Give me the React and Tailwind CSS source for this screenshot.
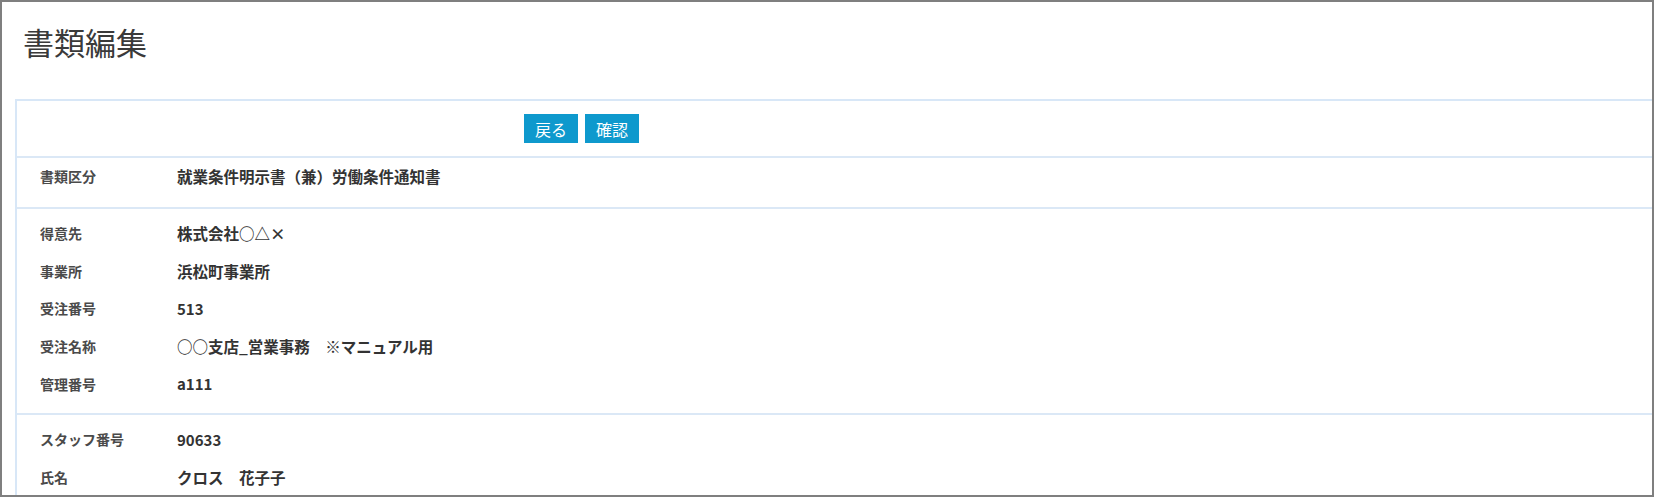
import React from "react";

const FONT = { fontFamily: '"Noto Sans CJK JP", "Liberation Sans", sans-serif' };

function Row({ label, value, latin }) {
  return (
    <div className="flex h-[37.7px] items-center">
      <div className="w-[160px] pl-[23px] text-[14px] font-bold text-[#4a4a4a]">{label}</div>
      <div className={`${latin ? "text-[15px]" : "text-[15.5px]"} font-bold text-[#333]`}>{value}</div>
    </div>
  );
}

export default function App() {
  return (
    <div
      className="flex h-[497px] w-[1654px] flex-col overflow-hidden border-2 border-[#7f7f7f] bg-white"
      style={FONT}
    >
      <div className="mt-[2px] h-[2px] bg-[#dfeaf6]" />
      <h1 className="mt-[18px] h-[40px] pl-[21px] text-[31px] font-normal leading-[40px] text-[#3a3a3a]">
        書類編集
      </h1>
      <div className="ml-[13px] mt-[37px] flex-1 border-l-2 border-t-2 border-[#d8e7f7]">
        <div className="flex h-[57px] items-center gap-[7px] border-b-2 border-[#dbe8f6] pl-[507px]">
          <button className="flex h-[29px] w-[54px] items-center justify-center bg-[#0e99cd] text-[16px] text-white">
            戻る
          </button>
          <button className="flex h-[29px] w-[54px] items-center justify-center bg-[#0e99cd] text-[16px] text-white">
            確認
          </button>
        </div>
        <div className="border-b-2 border-[#dbe8f6] pb-[11px]">
          <Row label="書類区分" value="就業条件明示書（兼）労働条件通知書" />
        </div>
        <div className="border-b-2 border-[#dbe8f6] pb-[10px] pt-[6px]">
          <Row label="得意先" value="株式会社○△×" />
          <Row label="事業所" value="浜松町事業所" />
          <Row label="受注番号" value="513" latin />
          <Row label="受注名称" value="○○支店_営業事務　※マニュアル用" />
          <Row label="管理番号" value="a111" latin />
        </div>
        <div className="pt-[6px]">
          <Row label="スタッフ番号" value="90633" latin />
          <Row label="氏名" value="クロス　花子子" />
        </div>
      </div>
    </div>
  );
}
